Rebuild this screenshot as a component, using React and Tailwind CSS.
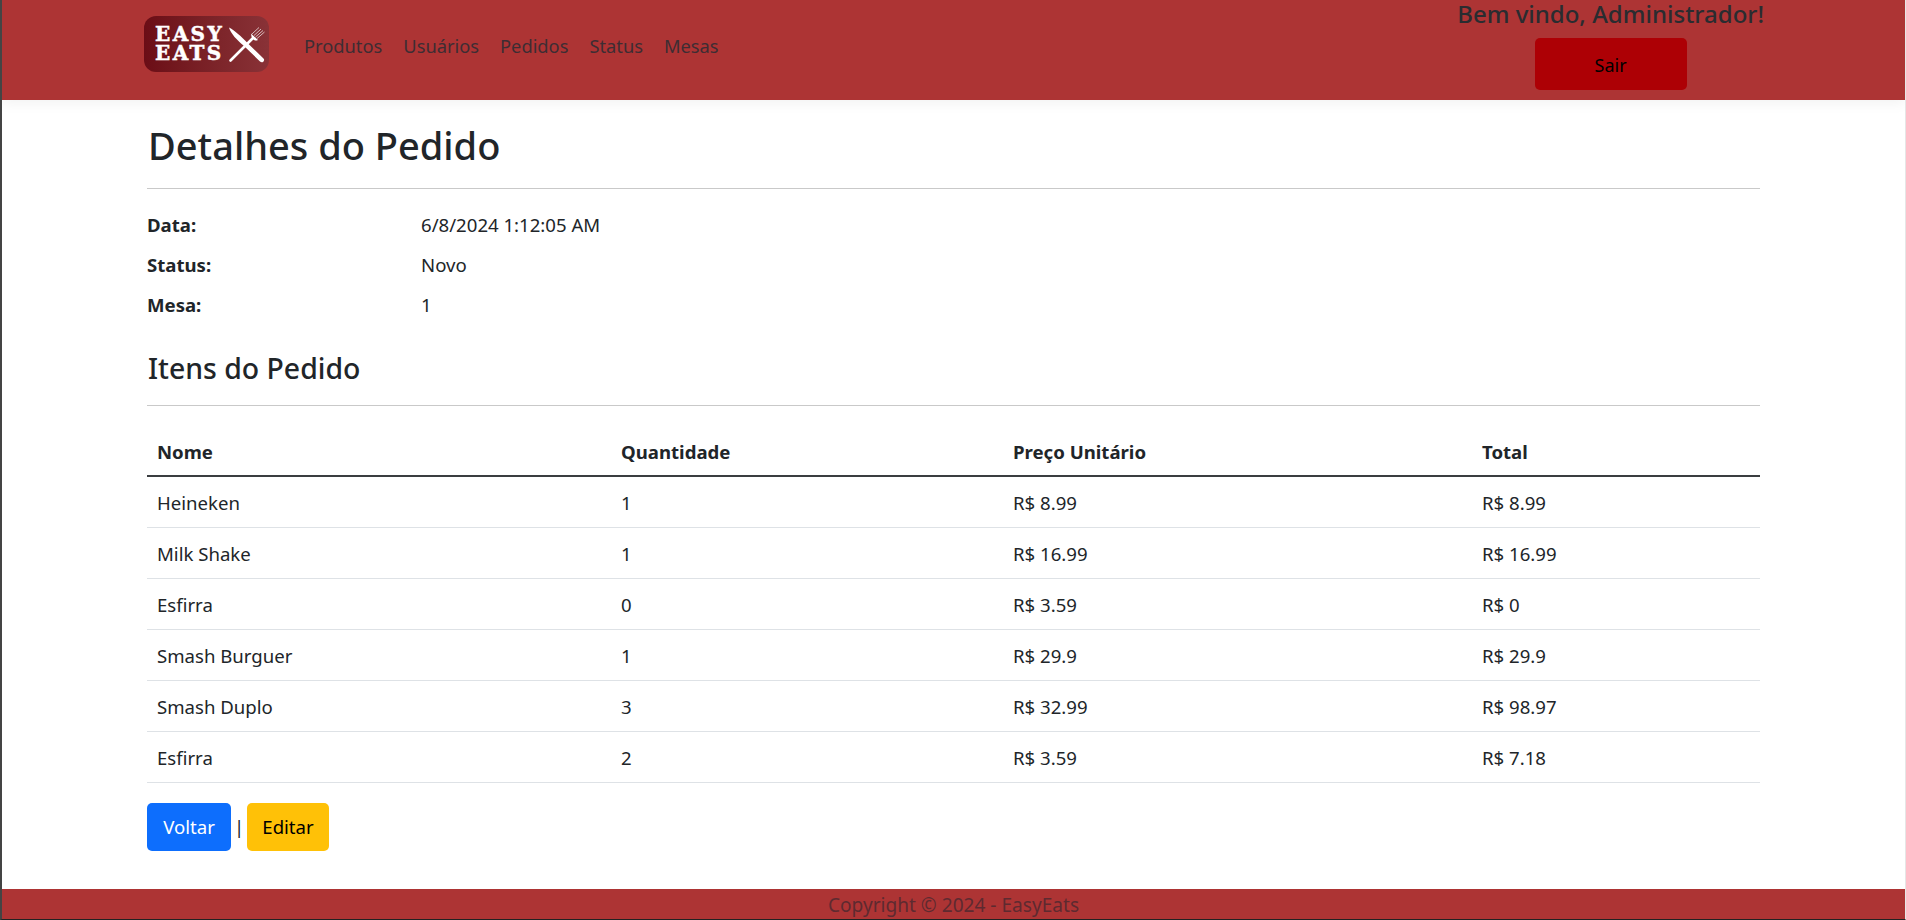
import React from 'react';

const itens = [
  { nome: 'Heineken', qtd: 1, preco: 'R$ 8.99', total: 'R$ 8.99' },
  { nome: 'Milk Shake', qtd: 1, preco: 'R$ 16.99', total: 'R$ 16.99' },
  { nome: 'Esfirra', qtd: 0, preco: 'R$ 3.59', total: 'R$ 0' },
  { nome: 'Smash Burguer', qtd: 1, preco: 'R$ 29.9', total: 'R$ 29.9' },
  { nome: 'Smash Duplo', qtd: 3, preco: 'R$ 32.99', total: 'R$ 98.97' },
  { nome: 'Esfirra', qtd: 2, preco: 'R$ 3.59', total: 'R$ 7.18' },
];

const detalhes = [
  ['Data:', '6/8/2024 1:12:05 AM'],
  ['Status:', 'Novo'],
  ['Mesa:', '1'],
];

const links = ['Produtos', 'Usuários', 'Pedidos', 'Status', 'Mesas'];

const Logo = () => (
  <div className="w-[125px] h-[56px] rounded-[12px] bg-gradient-to-r from-[#6b0d16] to-[#893237] flex items-center pl-[11px] shrink-0">
    <div className="font-['DejaVu_Serif',serif] font-bold text-white text-[20px] leading-[19px] tracking-[2.4px] [-webkit-text-stroke:0.5px_white]">
      <div>EASY</div>
      <div>EATS</div>
    </div>
    <svg width="37" height="36" viewBox="0 0 37 36" className="ml-[4px] mt-[2px] shrink-0" fill="none">
      {/* faca */}
      <path d="M1 0.5 C6 3 13 9 20 16.5 L35.5 31.5 Q37 33.5 35 35 Q33.5 35.8 32 34.5 L15.5 18.5 C9 13 3 7 1 0.5 Z" fill="#fff" />
      {/* garfo */}
      <path d="M25 11 L2.5 33.5" stroke="#fff" strokeWidth="2.6" strokeLinecap="round" />
      <path d="M23 6.5 L30 13 Q27 14.5 25 12 Q23 10 23 6.5 Z" fill="#fff" />
      <path d="M24 7 L31 0.5 M26 8.5 L33 2 M27.5 10 L35 3.5 M29 11.5 L36.5 5" stroke="#fff" strokeWidth="0.8" opacity="0.85" />
    </svg>
  </div>
);

export default function App() {
  return (
    <div className="h-[920px] flex flex-col overflow-hidden bg-white border-l-2 border-[#444] border-r border-r-[#e6e6e6] border-b border-b-[#222] text-[#212529] font-['Noto_Sans',sans-serif]">
      <header className="h-[100px] shrink-0 bg-[#ad3434] shadow-[0_4px_12px_rgba(0,0,0,0.05)] flex pl-[142px] pr-[141px] relative">
        <div className="flex items-center pb-[12px]">
          <Logo />
          <nav className="flex gap-[21px] ml-[35px] mt-[3px] text-[18.3px] text-[#3d2d33]">
            {links.map((nome) => (
              <a key={nome} href="#">{nome}</a>
            ))}
          </nav>
        </div>
        <div className="ml-auto flex flex-col items-center">
          <div className="text-[24px] leading-[28px] font-medium text-[#2a2c30]">Bem vindo, Administrador!</div>
          <button className="mt-[10px] w-[152px] h-[52px] rounded-[5px] bg-[#ad0005] text-black text-[18px] pt-[2px]">Sair</button>
        </div>
      </header>

      <main className="flex-1 pl-[145px] pr-[145px]">
        <h1 className="text-[38px] leading-[48px] font-medium mt-[21px] pl-[1px]">Detalhes do Pedido</h1>
        <hr className="mt-[19px] border-0 border-t border-[#c9c9c9]" />
        <dl className="mt-[16px] grid grid-cols-[274px_1fr] auto-rows-[40px] text-[18.6px] leading-[40px]">
          {detalhes.map(([rotulo, valor]) => (
            <React.Fragment key={rotulo}>
              <dt className="font-bold">{rotulo}</dt>
              <dd>{valor}</dd>
            </React.Fragment>
          ))}
        </dl>
        <h2 className="text-[28.4px] leading-[34px] font-medium mt-[26px] pl-[1px]">Itens do Pedido</h2>
        <hr className="mt-[20px] border-0 border-t border-[#c9c9c9]" />
        <table className="w-full table-fixed mt-[19px] text-[18.6px] border-collapse">
          <thead>
            <tr className="h-[51px] border-b-2 border-[#3a3d40] text-left">
              <th className="w-[464px] px-[10px] pt-[3px] font-bold">Nome</th>
              <th className="w-[392px] px-[10px] pt-[3px] font-bold">Quantidade</th>
              <th className="w-[469px] px-[10px] pt-[3px] font-bold">Preço Unitário</th>
              <th className="px-[10px] pt-[3px] font-bold">Total</th>
            </tr>
          </thead>
          <tbody>
            {itens.map((item, i) => (
              <tr key={i} className="h-[51px] border-b border-[#dee2e6]">
                <td className="px-[10px] pt-[2px]">{item.nome}</td>
                <td className="px-[10px] pt-[2px]">{item.qtd}</td>
                <td className="px-[10px] pt-[2px]">{item.preco}</td>
                <td className="px-[10px] pt-[2px]">{item.total}</td>
              </tr>
            ))}
          </tbody>
        </table>
        <div className="flex items-center mt-[20px] text-[18.6px]">
          <a href="#" className="w-[84px] h-[48px] rounded-[5px] bg-[#0d6efd] text-white flex items-center justify-center">Voltar</a>
          <span className="w-[16px] text-center">|</span>
          <a href="#" className="w-[82px] h-[48px] rounded-[5px] bg-[#ffc107] text-black flex items-center justify-center">Editar</a>
        </div>
      </main>

      <footer className="h-[30px] shrink-0 bg-[#ad3434] text-center text-[#5e2a30] text-[19.1px] leading-[33px] overflow-hidden">
        Copyright © 2024 - EasyEats
      </footer>
    </div>
  );
}
